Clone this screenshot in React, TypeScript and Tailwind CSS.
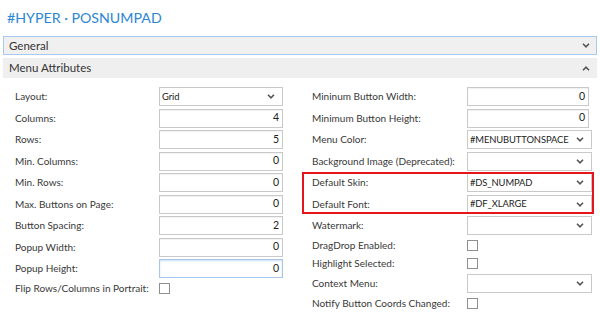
import React from "react";

const Chevron = ({ up = false }: { up?: boolean }) => (
  <svg width="8" height="5" viewBox="0 0 8 5" className="shrink-0">
    <polyline
      points={up ? "1,4.2 4,1.2 7,4.2" : "1,0.8 4,3.8 7,0.8"}
      fill="none"
      stroke="#555"
      strokeWidth="1.6"
    />
  </svg>
);

type Field =
  | { label: string; kind: "num"; value: string; focus?: boolean }
  | { label: string; kind: "select"; value: string }
  | { label: string; kind: "check" };

const NumInput = ({ value, focus, w }: { value: string; focus?: boolean; w: string }) => (
  <div
    className={`${w} h-[19px] border bg-white flex items-center justify-end pr-[3px] text-[10.5px] text-[#222] ${
      focus ? "border-[#a6c6ea] shadow-[inset_0_1px_2px_rgba(120,160,220,0.35)]" : "border-[#c9c9c9] shadow-[inset_0_1px_1px_rgba(0,0,0,0.06)]"
    }`}
  >
    {value}
  </div>
);

const Select = ({ value, w }: { value: string; w: string }) => (
  <div className={`${w} h-[19px] border border-[#c9c9c9] bg-white flex items-center justify-between pl-[2px] pr-[7px] text-[9.4px] tracking-[-0.1px] text-[#222]`}>
    <span className="whitespace-nowrap">{value}</span>
    <Chevron />
  </div>
);

const Check = () => <div className="w-[11px] h-[11px] border border-[#8f8f8f] bg-white" />;

const Row = ({ f, labelW, numW, selW }: { f: Field; labelW: string; numW: string; selW: string }) => (
  <div className={`flex items-center ${f.kind === "check" ? "h-[18px]" : "h-[21.5px]"}`}>
    <div className={`${labelW} shrink-0 text-[10px] text-[#383838] whitespace-nowrap`}>{f.label}</div>
    {f.kind === "num" && <NumInput value={f.value} focus={f.focus} w={numW} />}
    {f.kind === "select" && <Select value={f.value} w={selW} />}
    {f.kind === "check" && <Check />}
  </div>
);

const left: Field[] = [
  { label: "Layout:", kind: "select", value: "Grid" },
  { label: "Columns:", kind: "num", value: "4" },
  { label: "Rows:", kind: "num", value: "5" },
  { label: "Min. Columns:", kind: "num", value: "0" },
  { label: "Min. Rows:", kind: "num", value: "0" },
  { label: "Max. Buttons on Page:", kind: "num", value: "0" },
  { label: "Button Spacing:", kind: "num", value: "2" },
  { label: "Popup Width:", kind: "num", value: "0" },
  { label: "Popup Height:", kind: "num", value: "0", focus: true },
  { label: "Flip Rows/Columns in Portrait:", kind: "check" },
];

const rightTop: Field[] = [
  { label: "Mininum Button Width:", kind: "num", value: "0" },
  { label: "Minimum Button Height:", kind: "num", value: "0" },
  { label: "Menu Color:", kind: "select", value: "#MENUBUTTONSPACE" },
  { label: "Background Image (Deprecated):", kind: "select", value: "" },
];
const rightBoxed: Field[] = [
  { label: "Default Skin:", kind: "select", value: "#DS_NUMPAD" },
  { label: "Default Font:", kind: "select", value: "#DF_XLARGE" },
];
const rightBottom: Field[] = [
  { label: "Watermark:", kind: "select", value: "" },
  { label: "DragDrop Enabled:", kind: "check" },
  { label: "Highlight Selected:", kind: "check" },
  { label: "Context Menu:", kind: "select", value: "" },
  { label: "Notify Button Coords Changed:", kind: "check" },
];

export default function App() {
  const L = { labelW: "w-[144px]", numW: "w-[124px]", selW: "w-[124px]" };
  const R = { labelW: "w-[155px]", numW: "w-[122px]", selW: "w-[125px]" };
  return (
    <div className="w-[600px] h-[324px] bg-white overflow-hidden font-['Lato',sans-serif]">
      <div className="h-[36px] pl-[7px] pt-[8px] text-[14.2px] leading-[20px] text-[#2b86d4]">
        #HYPER · POSNUMPAD
      </div>
      <div className="mx-[3px] h-[19px] border border-[#a9c9f1] bg-[#f0f0f0] flex items-center justify-between pl-[5px] pr-[6px] text-[11.5px] text-[#333]">
        <span>General</span>
        <Chevron />
      </div>
      <div className="mx-[3px] mt-[3px] h-[20px] bg-[#efefef] flex items-center justify-between pl-[6px] pr-[7px] text-[11.5px] text-[#333]">
        <span>Menu Attributes</span>
        <Chevron up />
      </div>
      <div className="flex mt-[8px]">
        <div className="w-[300px] pl-[15px]">
          {left.map((f) => (
            <Row key={f.label} f={f} {...L} />
          ))}
        </div>
        <div className="w-[300px] pl-[12px]">
          {rightTop.map((f) => (
            <Row key={f.label} f={f} {...R} />
          ))}
          <div className="relative">
            {rightBoxed.map((f) => (
              <Row key={f.label} f={f} {...R} />
            ))}
            <div className="absolute left-[-10px] right-[6px] top-0 bottom-[1px] border-2 border-[#e8141b]" />
          </div>
          {rightBottom.map((f) => (
            <Row key={f.label} f={f} {...R} />
          ))}
        </div>
      </div>
    </div>
  );
}
